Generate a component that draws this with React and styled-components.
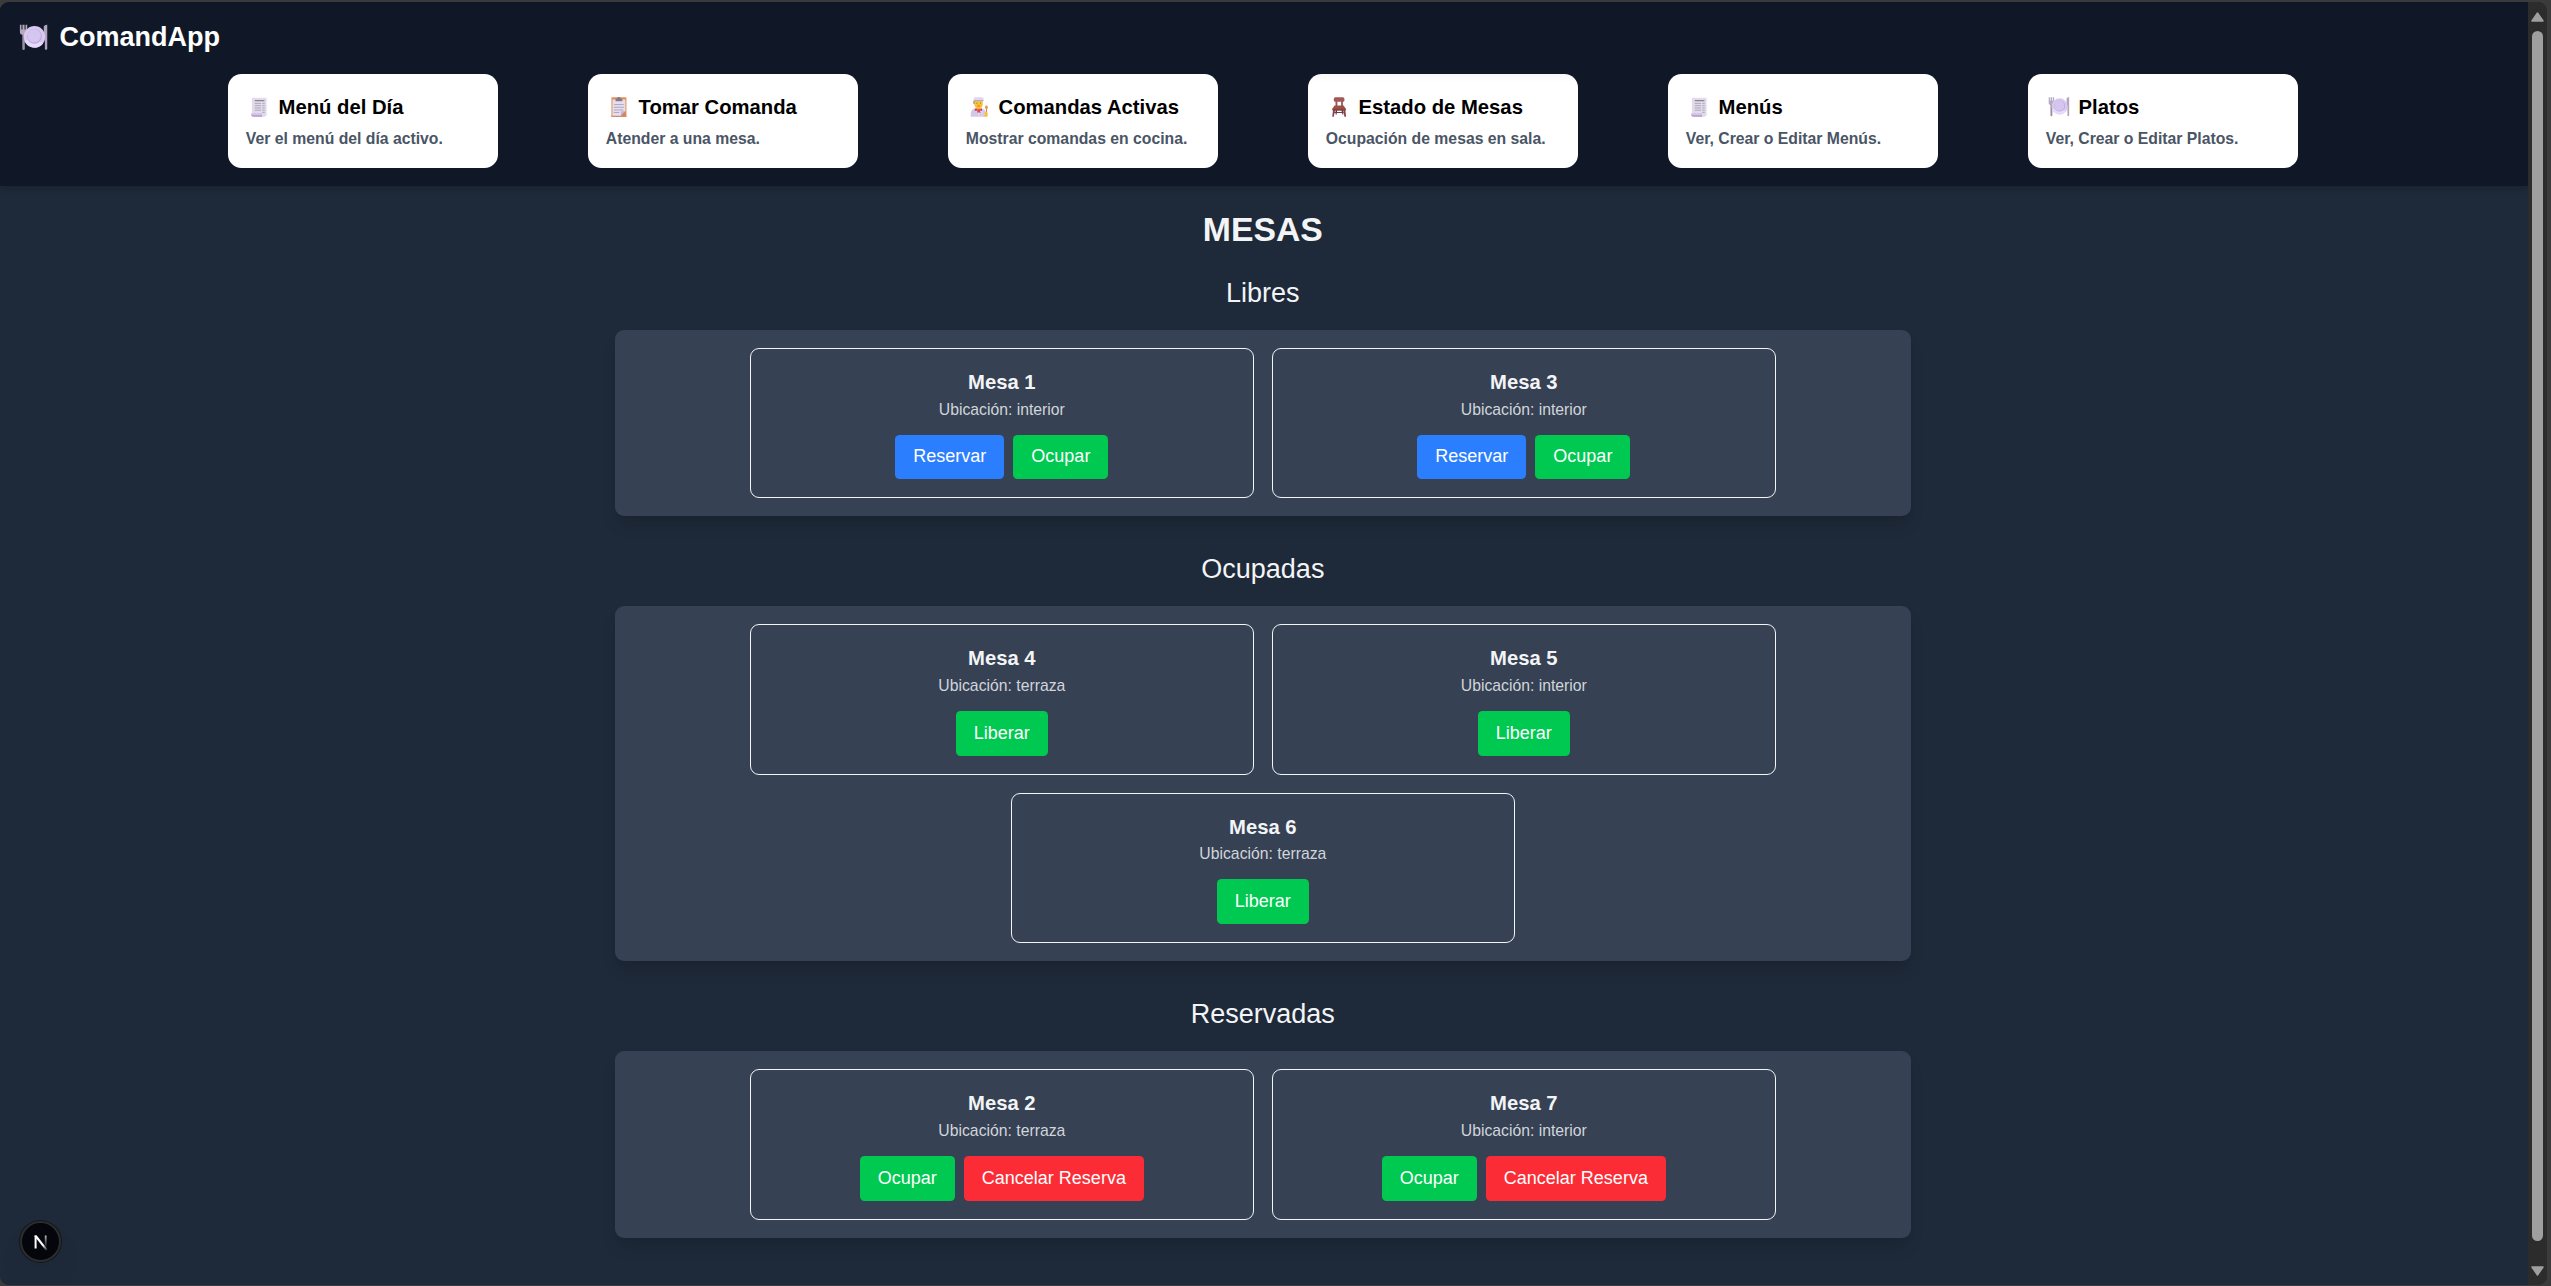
import React from "react";
import styled, { createGlobalStyle } from "styled-components";

const GlobalStyle = createGlobalStyle`
  *, *::before, *::after { box-sizing: border-box; }
  html, body { margin: 0; padding: 0; background: #3b3b3b; }
  body { font-family: "Liberation Sans", Arial, Helvetica, sans-serif; font-size: 18px; line-height: 27px; overflow: hidden; }
  h1, h2, h3, p { margin: 0; }
`;

const Frame = styled.div`
  height: 1286px;
  padding: 2px 4px 1px 0;
  background: #3b3b3b;
`;

const Viewport = styled.div`
  position: relative;
  display: flex;
  height: 100%;
  overflow: hidden;
  border-radius: 9px;
  background: #2c2c2c;
`;

const Page = styled.div`
  flex: 1;
  background: #1e2939;
  color: #f3f4f6;
`;

const Scrollbar = styled.div`
  width: 19px;
  display: flex;
  flex-direction: column;
  align-items: center;
  padding: 10px 0 9px;
  background: #2c2c2c;
`;

const ScrollArrow = styled.svg`
  display: block;
  width: 13px;
  height: 10px;
  fill: #9f9f9f;
  stroke: #9f9f9f;
  stroke-width: 1.5;
  stroke-linejoin: round;
`;

const Thumb = styled.div`
  width: 11px;
  height: 1210px;
  margin: 9px 0 auto;
  border-radius: 6px;
  background: #9f9f9f;
`;

const Header = styled.header`
  height: 184px;
  padding: 18px 2.3px 0 0;
  background: #101828;
  box-shadow: 0 4.5px 6.75px -1px rgba(0, 0, 0, 0.1), 0 2px 4.5px -2px rgba(0, 0, 0, 0.1);
`;

const Logo = styled.h1`
  display: flex;
  align-items: center;
  gap: 7.5px;
  height: 36px;
  padding-left: 15px;
  font-size: 27px;
  line-height: 34px;
  font-weight: 700;
  color: #fff;
`;

const LogoText = styled.span`
  padding-bottom: 2px;
`;

const Nav = styled.nav`
  display: flex;
  justify-content: center;
  gap: 90px;
  margin-top: 18px;
`;

const NavCard = styled.a`
  width: 270px;
  height: 94px;
  padding: 18px;
  border-radius: 13.5px;
  background: ${(p) => (p.$active ? "linear-gradient(#f7f7f8, #fff 8px)" : "#fff")};
`;

const NavTitle = styled.h2`
  display: flex;
  align-items: center;
  gap: 5px;
  padding-bottom: 1px;
  font-size: 20.25px;
  line-height: 30.5px;
  font-weight: 700;
  color: #000;
`;

const NavText = styled.p`
  margin-top: 4px;
  font-size: 15.75px;
  line-height: 22.5px;
  font-weight: 700;
  color: #4a5565;
`;

const EmojiBox = styled.span`
  display: flex;
  justify-content: center;
  align-items: center;
  flex: none;
  width: 1.37em;
  padding-right: ${(p) => p.$inset || 0}px;
`;

const Glyph = styled.svg`
  display: block;
  flex: none;
  width: 1.08em;
  height: 1.08em;
`;

const Main = styled.main`
  display: flex;
  flex-direction: column;
  align-items: center;
  padding: 22.5px 2.3px 0 0;
`;

const PageTitle = styled.h1`
  margin-bottom: 27px;
  font-size: 33.75px;
  line-height: 40.5px;
  font-weight: 700;
`;

const Section = styled.section`
  width: 1296px;
  margin-bottom: 36px;
`;

const SectionTitle = styled.h2`
  margin-bottom: 18px;
  padding-bottom: 0.8px;
  text-align: center;
  font-size: 27px;
  line-height: 35.2px;
  font-weight: 400;
`;

const Panel = styled.div`
  display: flex;
  flex-wrap: wrap;
  justify-content: center;
  gap: 18px;
  padding: 18px;
  border-radius: 9px;
  background: #364153;
  box-shadow: 0 11.25px 17px -3.4px rgba(0, 0, 0, 0.1), 0 4.5px 6.75px -4.5px rgba(0, 0, 0, 0.1);
`;

const TableCard = styled.article`
  width: 504px;
  padding: 18px;
  border: 1px solid #f3f4f6;
  border-radius: 9px;
  text-align: center;
`;

const TableName = styled.h3`
  padding-bottom: 0.8px;
  font-size: 20.25px;
  line-height: 30.7px;
  font-weight: 700;
`;

const Place = styled.p`
  padding-bottom: 0.8px;
  font-size: 15.75px;
  line-height: 21.7px;
  color: #d1d5dc;
`;

const Actions = styled.div`
  display: flex;
  justify-content: center;
  gap: 9px;
  margin-top: 13.5px;
`;

const tones = { blue: "#2b7fff", green: "#00c951", red: "#fb2c36" };

const Button = styled.button`
  padding: 8.6px 18px 9.4px;
  border: 0;
  border-radius: 4.5px;
  font: inherit;
  line-height: 27px;
  color: #fff;
  background: ${(p) => tones[p.$tone]};
`;

const DevBadge = styled.div`
  position: absolute;
  left: 20px;
  bottom: 23px;
  display: flex;
  align-items: center;
  justify-content: center;
  width: 41px;
  height: 41px;
  border: 2px solid #2b2d31;
  border-radius: 50%;
  background: #05060b;
  box-shadow: 0 18px 36px -8px rgba(0, 0, 0, 0.1), 0 0 0 1px #171717;
`;

const Plate = () => (
  <Glyph viewBox="0 0 32 32">
    <rect x="3.6" y="12" width="2.8" height="17.5" rx="1.3" fill="#998ea4" />
    <path d="M1 2h1.7v5h1.1V2h2.3v5h1.1V2H9v8.2c0 2-1.4 3-4 3s-4-1-4-3z" fill="#b4a9bd" />
    <path d="M27.2 4.5C27.2 3 28.5 2 31 2v26.2c0 1.7-2.6 1.7-2.6 0V17h-1.2z" fill="#b1a5bb" />
    <circle cx="17" cy="15.2" r="11.8" fill="#d9c9f1" />
    <path d="M6 19.5a11.8 11.8 0 0 0 20.5 2.7l-4.8-2A8 8 0 0 1 9.2 18z" fill="#e6d9fa" />
    <circle cx="17" cy="14.5" r="8.2" fill="#bda9e1" />
    <circle cx="16.6" cy="14.1" r="7.4" fill="#d5c6ef" />
  </Glyph>
);

const Receipt = () => (
  <Glyph viewBox="0 0 32 32">
    <path d="M5.8 2.2l1.7 1 1.7-1 1.8 1 1.8-1 1.8 1 1.8-1 1.8 1 1.8-1 1.8 1 1.8-1 1.8 1 1.8-1V26c0 2.8-1 4.5-3.5 4.5H5.8z" fill="#e1daea" />
    <path d="M4.3 26h16v2c0 1.5 1 2.5 2.2 2.5H8c-2.3 0-3.7-1.6-3.7-4.5z" fill="#b49bd2" />
    <path d="M4.3 26h15.8v2H5z" fill="#d3c3e4" />
    <path d="M10 6.8h14" stroke="#8b8297" strokeWidth="1.8" />
    <path d="M10 10.8h9M21 10.8h3.5M10 14.1h9M21 14.1h3.5M10 17.4h9M21 17.4h3.5M10 20.7h9M21 20.7h3.5M21 24h3.5" stroke="#aaa1b4" strokeWidth="1.3" />
  </Glyph>
);

const Clipboard = () => (
  <Glyph viewBox="0 0 32 32">
    <rect x="5" y="2" width="22" height="28.5" rx="1" fill="#e39152" />
    <path d="M5 28.5h22v2H5z" fill="#ca8275" />
    <path d="M6.5 5.3h19V22l-6.6 7H6.5z" fill="#e6def0" />
    <path d="M25.5 22.3l-6.6 6.7v-5.4c0-.8.5-1.3 1.3-1.3z" fill="#c4b4d4" />
    <path d="M25.5 22.5V29H19z" fill="#ce8568" />
    <path d="M11 7.8V5.300C11 4.300 11.600 3.800 12.600 3.800h1C13.800 2.400 14.600 1.600 16 1.600s2.200.8 2.400 2.200h1c1 0 1.600.5 1.600 1.500v2.500z" fill="#837889" />
    <path d="M9 12.500h14M8.500 16.500h15M8.500 20.500h14M8.500 24.200h8" stroke="#aaa0b3" strokeWidth="1.300" />
  </Glyph>
);

const Cook = () => (
  <Glyph viewBox="0 0 32 32">
    <path d="M4 30.500v-4.500c0-5 3.500-7.500 8-8h6c4.700.5 8.500 3 8.500 8v4.500z" fill="#d4c9e2" />
    <path d="M15 21h6v9.500h-6z" fill="#dfd6eb" />
    <path d="M12 14h6v5l-3 2-3-2z" fill="#f09d2b" />
    <path d="M9.500 6h12v6.500c0 4-2.700 6-6 6s-6-2-6-6z" fill="#fbc22f" />
    <path d="M9.500 7v5.500L8 11V7z" fill="#8f6348" />
    <path d="M8.500 7C7.800 4.500 8 2 10.500 1.700h9.800C23.500 2 23.500 4.500 22.500 7z" fill="#dfd7ed" />
    <path d="M9 6h13.500v1.600H9z" fill="#b6a9ce" />
    <path d="M12.500 10.500h1M18 10.500h1" stroke="#714c38" strokeWidth="1.400" />
    <path d="M13.500 14.500h4" stroke="#c75a2e" strokeWidth="1" />
    <path d="M10 18l5.200 2L20.500 18v4l-3.200-.8.700 3h-4.500l.4-3-3.900.8z" fill="#d83f5f" />
    <path d="M18.500 23.500v1M18.500 27v1" stroke="#8e7e9b" strokeWidth="1.200" />
    <ellipse cx="27" cy="16.500" rx="2.100" ry="2.800" fill="#ed9864" />
    <path d="M26.300 18.500h1.400V25h-1.400z" fill="#dd7c4f" />
    <path d="M24.500 24.500c1.500-.8 3-.8 4.300 0v4.500c0 1-.7 1.500-1.500 1.500h-3z" fill="#fbc22f" />
  </Glyph>
);

const Chair = () => (
  <Glyph viewBox="0 0 32 32">
    <path d="M11 7h2.700v9H11zM19.200 7h2.600v9h-2.600z" fill="#965553" />
    <rect x="8.500" y="2" width="15.500" height="6.500" rx="2.200" fill="#a15857" />
    <path d="M11 19h2.500l-.8 8h-1.500zM19.300 19h2.500l.6 8H21z" fill="#5e3048" />
    <path d="M9 23.500h14v1.500H9z" fill="#76394e" />
    <path d="M7.500 19h3.200L8.500 30.500H6.200zM22 19h3.200l1.300 11.500h-2.400z" fill="#874249" />
    <path d="M9.500 14h13.500l3 4.500v1.200c0 1-.6 1.500-1.600 1.500H8c-1 0-1.600-.5-1.600-1.500v-1.200z" fill="#9c5144" />
    <path d="M6.400 18.800h19.600v1c0 .9-.6 1.400-1.600 1.400H8c-1 0-1.600-.5-1.600-1.400z" fill="#85433c" />
  </Glyph>
);

const NextMark = () => (
  <svg width="16" height="18" viewBox="0 0 16 18">
    <defs>
      <linearGradient id="diag" x1="7" y1="9" x2="14" y2="17" gradientUnits="userSpaceOnUse">
        <stop offset="0.4" stopColor="#fff" />
        <stop offset="1" stopColor="#fff" stopOpacity="0.1" />
      </linearGradient>
      <linearGradient id="stem" x1="0" y1="2" x2="0" y2="14" gradientUnits="userSpaceOnUse">
        <stop stopColor="#fff" stopOpacity="0.75" />
        <stop offset="1" stopColor="#fff" stopOpacity="0.05" />
      </linearGradient>
    </defs>
    <path d="M1.600 2.500h2v13H1.600z" fill="#fff" />
    <path d="M1.600 2.500h2.200L14.600 16.500l-1.500 1.200L1.600 3.500z" fill="url(#diag)" />
    <path d="M11.800 2.500h1.800v12h-1.800z" fill="url(#stem)" />
  </svg>
);

const links = [
  { Icon: Receipt, title: "Menú del Día", text: "Ver el menú del día activo." },
  { Icon: Clipboard, title: "Tomar Comanda", text: "Atender a una mesa." },
  { Icon: Cook, title: "Comandas Activas", text: "Mostrar comandas en cocina." },
  { Icon: Chair, title: "Estado de Mesas", text: "Ocupación de mesas en sala.", active: true },
  { Icon: Receipt, title: "Menús", text: "Ver, Crear o Editar Menús." },
  { Icon: Plate, title: "Platos", text: "Ver, Crear o Editar Platos." },
];

const reserve = { label: "Reservar", tone: "blue" };
const occupy = { label: "Ocupar", tone: "green" };
const release = { label: "Liberar", tone: "green" };
const cancel = { label: "Cancelar Reserva", tone: "red" };

const groups = [
  { title: "Libres", actions: [reserve, occupy], tables: [[1, "interior"], [3, "interior"]] },
  { title: "Ocupadas", actions: [release], tables: [[4, "terraza"], [5, "interior"], [6, "terraza"]] },
  { title: "Reservadas", actions: [occupy, cancel], tables: [[2, "terraza"], [7, "interior"]] },
];

export default function App() {
  return (
    <Frame>
      <GlobalStyle />
      <Viewport>
        <Page>
          <Header>
            <Logo>
              <EmojiBox><Plate /></EmojiBox>
              <LogoText>ComandApp</LogoText>
            </Logo>
            <Nav>
              {links.map(({ Icon, title, text, active }) => (
                <NavCard key={title} $active={active}>
                  <NavTitle>
                    <EmojiBox $inset={1.6}><Icon /></EmojiBox>
                    <span>{title}</span>
                  </NavTitle>
                  <NavText>{text}</NavText>
                </NavCard>
              ))}
            </Nav>
          </Header>
          <Main>
            <PageTitle>MESAS</PageTitle>
            {groups.map((group) => (
              <Section key={group.title}>
                <SectionTitle>{group.title}</SectionTitle>
                <Panel>
                  {group.tables.map(([number, place]) => (
                    <TableCard key={number}>
                      <TableName>Mesa {number}</TableName>
                      <Place>Ubicación: {place}</Place>
                      <Actions>
                        {group.actions.map((action) => (
                          <Button key={action.label} $tone={action.tone}>{action.label}</Button>
                        ))}
                      </Actions>
                    </TableCard>
                  ))}
                </Panel>
              </Section>
            ))}
          </Main>
        </Page>
        <Scrollbar>
          <ScrollArrow viewBox="0 0 13 10"><path d="M6.500 1L12 9H1z" /></ScrollArrow>
          <Thumb />
          <ScrollArrow viewBox="0 0 13 10"><path d="M6.500 9L12 1H1z" /></ScrollArrow>
        </Scrollbar>
        <DevBadge><NextMark /></DevBadge>
      </Viewport>
    </Frame>
  );
}
